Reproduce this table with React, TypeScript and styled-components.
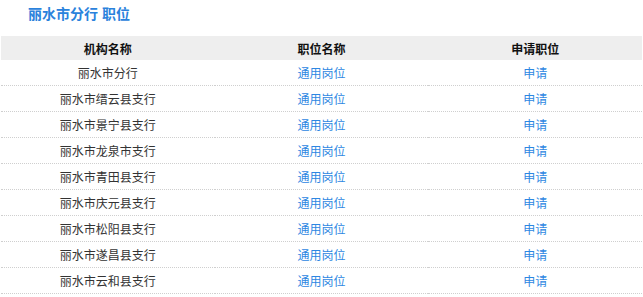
import React from 'react';
import styled, { createGlobalStyle } from 'styled-components';

const GlobalStyle = createGlobalStyle`
  body {
    margin: 0;
    background-color: #fff;
    font-family: "Liberation Sans", "Noto Sans CJK SC", sans-serif;
  }
`;

const Page = styled.div`
  width: 643px;
  padding: 0 1px;
  box-sizing: border-box;
`;

const Title = styled.h2`
  margin: 0;
  padding: 6px 0 0 27px;
  height: 36px;
  box-sizing: border-box;
  font-size: 14px;
  font-weight: 700;
  line-height: 16px;
  color: #2a82dc;
`;

const Table = styled.table`
  width: 100%;
  border-collapse: collapse;
  table-layout: fixed;
  font-size: 12px;
`;

const HeadCell = styled.th`
  height: 24px;
  padding: 0;
  background-color: #eeeeee;
  color: #111;
  font-weight: 700;
  text-align: center;
`;

const Cell = styled.td<{ $link?: boolean }>`
  height: 25px;
  padding: 0;
  text-align: center;
  border-bottom: 1px dotted #cfcfcf;
  color: ${(p) => (p.$link ? '#2d87e2' : '#333')};
`;

const branches = [
  '丽水市分行',
  '丽水市缙云县支行',
  '丽水市景宁县支行',
  '丽水市龙泉市支行',
  '丽水市青田县支行',
  '丽水市庆元县支行',
  '丽水市松阳县支行',
  '丽水市遂昌县支行',
  '丽水市云和县支行',
];

const App: React.FC = () => {
  return (
    <>
      <GlobalStyle />
      <Page>
        <Title>丽水市分行 职位</Title>
        <Table>
          <thead>
            <tr>
              <HeadCell>机构名称</HeadCell>
              <HeadCell>职位名称</HeadCell>
              <HeadCell>申请职位</HeadCell>
            </tr>
          </thead>
          <tbody>
            {branches.map((name) => (
              <tr key={name}>
                <Cell>{name}</Cell>
                <Cell $link>通用岗位</Cell>
                <Cell $link>申请</Cell>
              </tr>
            ))}
          </tbody>
        </Table>
      </Page>
    </>
  );
};

export default App;
